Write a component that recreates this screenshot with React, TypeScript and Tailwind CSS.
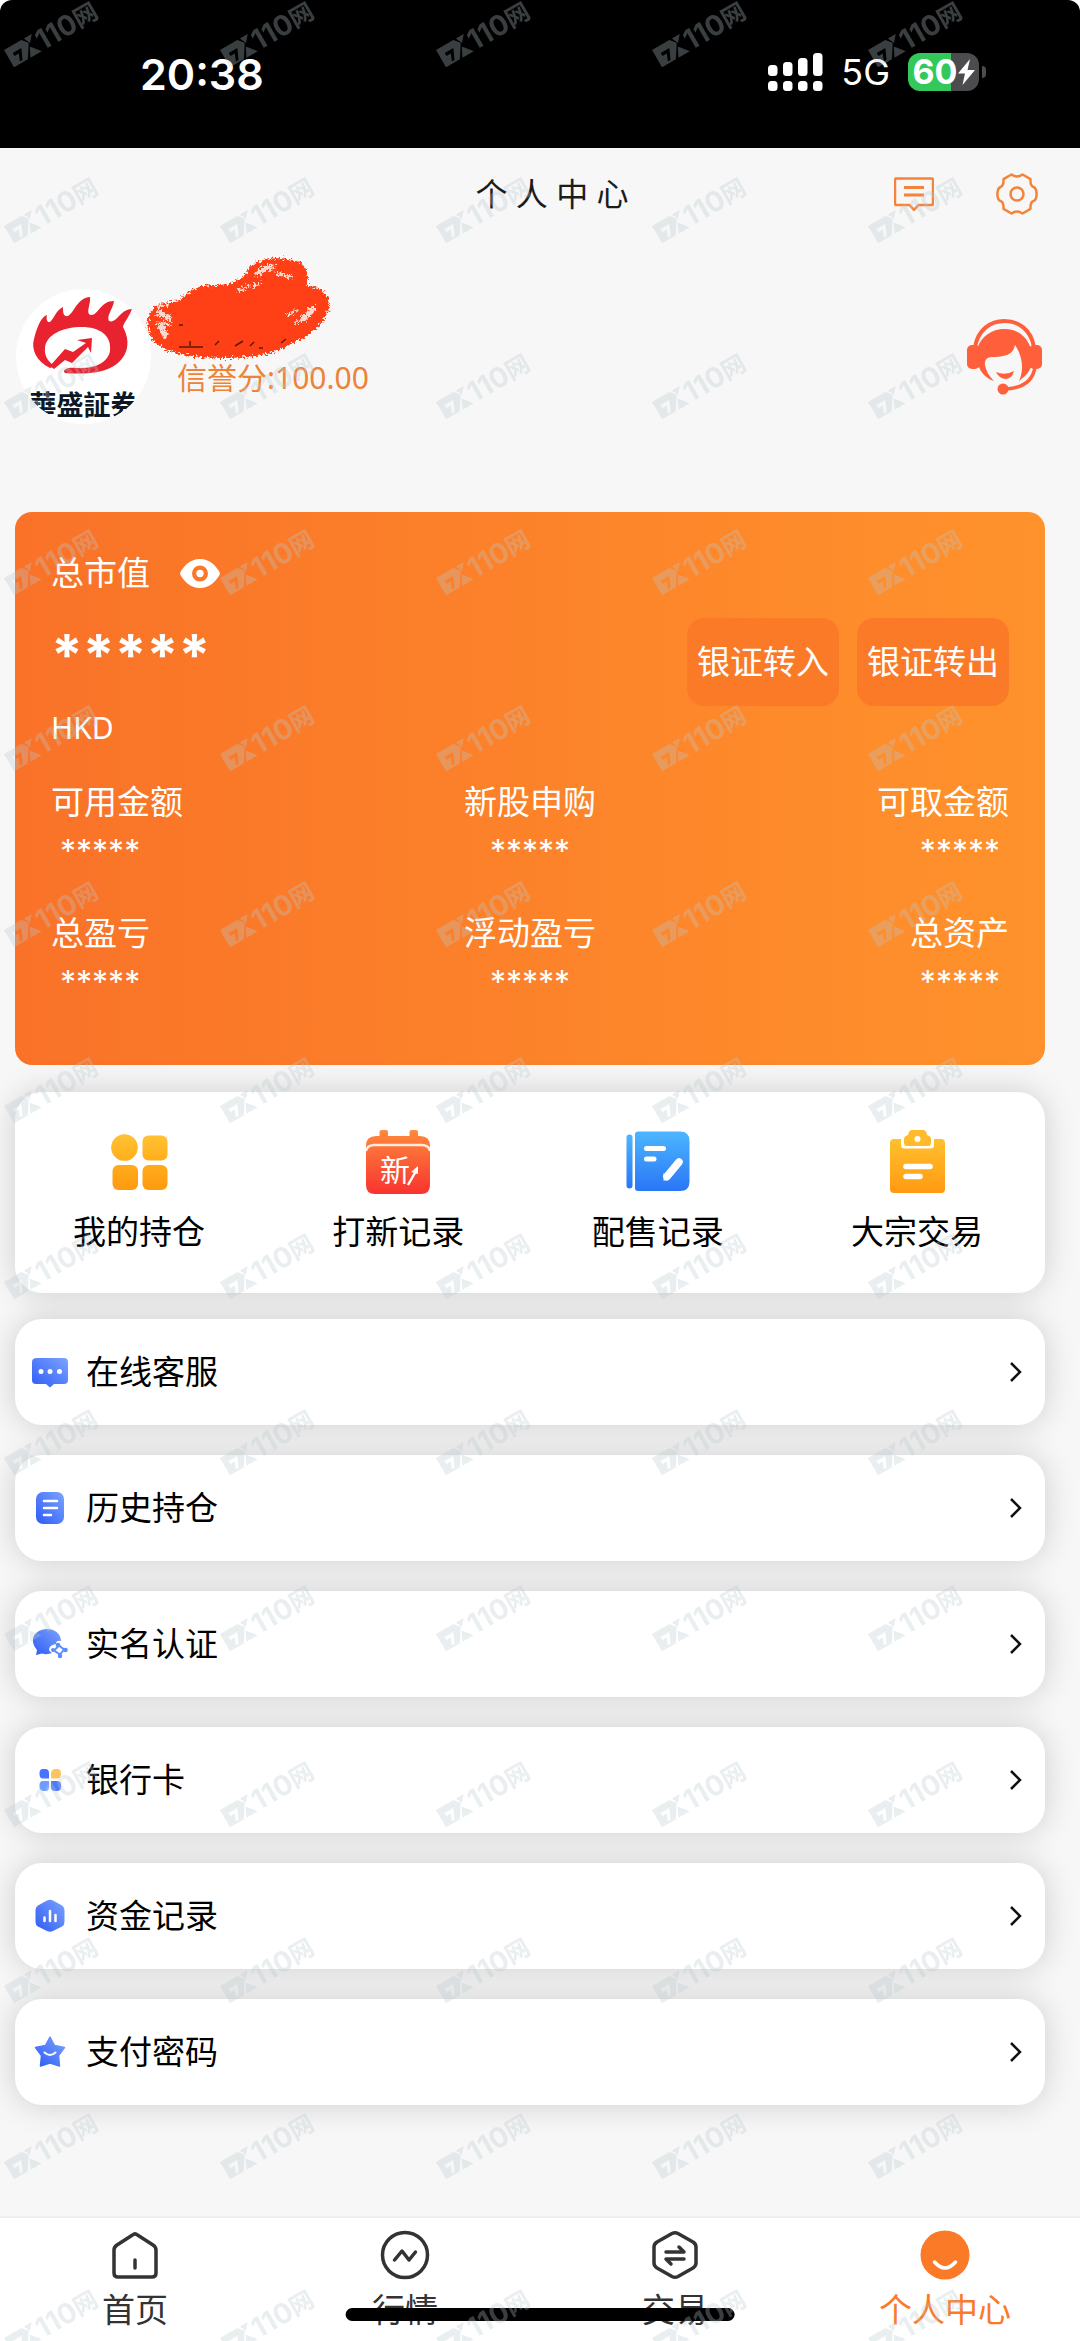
import type { ReactNode } from "react";

const FONT = "font-['Noto_Sans','Noto_Sans_CJK_SC',sans-serif]";

function Watermark() {
  return (
    <svg aria-hidden="true" className="pointer-events-none absolute inset-0 z-30 h-full w-full">
      <defs>
        <pattern id="wm" width="216" height="176" patternUnits="userSpaceOnUse">
          <g transform="translate(4 50) rotate(-30)" fill="#b8c8d0" fillOpacity="0.31">
            <path
              fillRule="evenodd"
              d="M0 0H20L25 6L16 20H0ZM6 7H16L11 18H8L11 10.500H6Z"
            />
            <path d="M23 0H32L26 7ZM26 12L32 20H19L24 10Z" />
            <text x="33" y="20" fontSize="28" fontWeight="700" fontFamily="Inter, sans-serif">
              110
            </text>
            <text x="76" y="19" fontSize="24" fontWeight="700" fontFamily="'Noto Sans CJK SC', sans-serif">
              网
            </text>
          </g>
        </pattern>
      </defs>
      <rect width="100%" height="100%" fill="url(#wm)" />
    </svg>
  );
}

function StatusBar() {
  const bars = [
    { x: 0, y: 12 },
    { x: 15, y: 9 },
    { x: 30, y: 5 },
    { x: 45, y: 0 },
  ];
  return (
    <div className="bg-white">
      <div className="flex h-[148px] items-start justify-between rounded-t-[12px] bg-black pt-[46px] pr-[94px] pl-[140px] font-['Inter',sans-serif] text-white">
        <span className="text-[43px] leading-[56px] font-semibold">20:38</span>
        <div className="flex h-[52px] items-center gap-[18px]">
          <svg width="55" height="38" viewBox="0 0 55 38" fill="#fff" aria-hidden="true">
            {bars.map((b) => (
              <g key={b.x}>
                <rect x={b.x} y={b.y} width="9.500" height={23 - b.y} rx="3.500" />
                <rect x={b.x} y="28" width="9.500" height="10" rx="3.500" />
              </g>
            ))}
          </svg>
          <span className="text-[36px] leading-[56px]">5G</span>
          <div className="flex items-center gap-[3px]">
            <div className="flex h-[38px] w-[71px] items-center justify-center rounded-[12px] bg-linear-to-r from-[#34c759] from-60% to-[#4c4c4e] to-60%">
              <span className="text-[34px] leading-[38px] font-bold">60</span>
              <svg width="17" height="26" viewBox="0 0 17 26" fill="#fff" aria-hidden="true">
                <path d="M12 0L0 14.500H7L4.500 26L17 11H9.500Z" />
              </svg>
            </div>
            <div className="h-[12px] w-[4px] rounded-r-full bg-[#4c4c4e]" />
          </div>
        </div>
      </div>
    </div>
  );
}

function Header() {
  return (
    <header className="grid h-[92px] grid-cols-[1fr_auto_1fr] items-center pr-[42px] pl-[66px]">
      <span />
      <h1 className="text-[32px] leading-[48px] text-[#1c1c1c]">个 人 中 心</h1>
      <div className="flex items-center justify-end gap-[62px]">
        <button type="button" aria-label="消息">
          <svg width="40" height="34" viewBox="0 0 40 34" fill="none" stroke="#f5833a" strokeWidth="2.500" strokeLinejoin="round">
            <path d="M2.500 1.500H37.500Q39 1.500 39 3V26.500Q39 28 37.500 28H24.500L20 32.800L15.500 28H2.500Q1 28 1 26.500V3Q1 1.500 2.500 1.500Z" />
            <path d="M10 10.500H30M10 18H30" strokeWidth="2.800" />
          </svg>
        </button>
        <button type="button" aria-label="设置">
          <svg width="42" height="42" viewBox="0 0 42 42" fill="none" stroke="#f5833a" strokeWidth="2.500" strokeLinejoin="round">
            <path d="M15.500 1.500Q21 5.500 26.500 1.500L34.500 6.200Q34 13.500 38.500 14.500Q41 17 40.500 21Q41 25 38.500 27.500Q34 28.500 34.500 35.800L26.500 40.500Q21 36.500 15.500 40.500L7.500 35.800Q8 28.500 3.500 27.500Q1 25 1.500 21Q1 17 3.500 14.500Q8 13.500 7.500 6.200Z" />
            <circle cx="21" cy="21" r="6.500" />
          </svg>
        </button>
      </div>
    </header>
  );
}

function BrandLogo() {
  return (
    <div className="relative h-[135px] w-[135px] overflow-hidden rounded-full bg-white">
      <svg width="135" height="100" viewBox="0 0 135 100" aria-hidden="true">
        <path
          fill="#e8222f"
          d="M34 79C20 72 15 60 18 50C21 38 25 28 31 26C30 30 31 34 34 33C38 30 40 21 47 18C47 23 47 28 52 27C58 24 61 9 74 8C75 15 69 25 75 26C83 26 84 12 98 12C97 20 90 27 93 32C101 35 104 20 116 20C113 28 107 35 107 38C118 58 108 76 86 82C74 85 60 85 49 84C45 80 54 78 60 79C80 80 92 73 94 62C96 46 83 38 66 38C46 38 30 46 29 59C28 67 33 74 39 77Z"
        />
        <path fill="#e8222f" d="M34 77L49 60L57 63L70 54L61 51L76 49L75 64L72 58L56 74L49 71L38 80Z" />
      </svg>
      <span className="absolute inset-x-0 bottom-[4px] text-center font-['Noto_Sans_CJK_TC',sans-serif] text-[27px] leading-[32px] font-bold whitespace-nowrap text-[#0d1826]">
        華盛証券
      </span>
    </div>
  );
}

function Scribble() {
  return (
    <svg width="186" height="106" viewBox="0 0 186 106" aria-hidden="true">
      <defs>
        <filter id="crayon" x="-5%" y="-5%" width="110%" height="110%">
          <feTurbulence type="fractalNoise" baseFrequency="0.45" numOctaves="2" seed="4" />
          <feDisplacementMap in="SourceGraphic" scale="9" xChannelSelector="R" yChannelSelector="G" />
        </filter>
      </defs>
      <g filter="url(#crayon)">
        <path
          fill="#ff4015"
          d="M4 61C7 51 18 46 34 47C42 34 56 29 76 30C92 29 100 22 105 12C116 2 138 1 154 7C164 14 164 24 162 31C176 31 185 40 184 52C181 68 166 80 148 88C132 99 108 103 80 103C54 103 28 100 15 91C4 84 0 72 4 61Z"
        />
        <g fill="none" stroke="#f9d9cf" strokeLinecap="round">
          <path d="M112 19Q118 12 128 12" strokeWidth="5" />
          <path d="M132 18L147 22M94 36L103 31M108 31L114 29" strokeWidth="3" />
          <path d="M14 58L24 63M16 72L20 80" strokeWidth="6" />
          <path d="M158 64L168 54" strokeWidth="6" />
          <path d="M11 67L26 70M143 60L152 55M150 68L156 66M12 52L22 50" strokeWidth="2" />
        </g>
      </g>
      <g stroke="#5a1a10" strokeWidth="1.500">
        <path d="M34 70H38M45 86V91M34 92H58M70 90L74 86M90 91L98 86M105 91L109 87M136 88L141 84M114 93H118" />
      </g>
    </svg>
  );
}

function Profile() {
  return (
    <section className="flex h-[272px] items-start pt-[15px] pr-[38px]">
      <div className="pt-[34px] pl-[16px]">
        <BrandLogo />
      </div>
      <div className="-ml-[6px] flex flex-col">
        <Scribble />
        <p className="-mt-[4px] pl-[32px] text-[30px] leading-[42px] text-[#ee8238]">信誉分:100.00</p>
      </div>
      <button type="button" aria-label="客服" className="mt-[64px] ml-auto">
        <svg width="75" height="76" viewBox="0 0 75 76" aria-hidden="true">
          <path d="M8 28C11 11 23 2 37.500 2S64 11 67 28" fill="none" stroke="#ff603b" strokeWidth="4" />
          <rect x="0" y="26" width="13" height="24" rx="5" fill="#ff603b" />
          <rect x="62" y="26" width="13" height="24" rx="5" fill="#ff603b" />
          <path
            fill="#ff603b"
            d="M10 30C14 17 25 10 37.500 10S60 17 64 30V48C61 55 57 58 52 62C57 51 56 38 48 26C46 36 38 38 24 38Q17 39 18 46C19 52 22 57 27 62C18 59 14 53 12 48Z"
          />
          <path d="M29 53Q38 57 47 52Q45 60 38 60Q32 59 29 53Z" fill="#ff603b" />
          <path d="M68 48C66 62 55 69 39 70" fill="none" stroke="#ff603b" strokeWidth="3.500" />
          <circle cx="36" cy="70" r="5.500" fill="#ff603b" />
        </svg>
      </button>
    </section>
  );
}

const STATS = [
  { label: "可用金额", align: "text-left" },
  { label: "新股申购", align: "text-center" },
  { label: "可取金额", align: "text-right" },
  { label: "总盈亏", align: "text-left" },
  { label: "浮动盈亏", align: "text-center" },
  { label: "总资产", align: "text-right" },
];

function AssetCard() {
  return (
    <section className="rounded-[17px] bg-linear-to-r from-[#f97228] to-[#ff922c] px-[36px] pt-[37px] pb-[62px] text-[33px] leading-[48px] text-white">
      <div className="flex items-center gap-[30px]">
        <span>总市值</span>
        <button type="button" aria-label="显示金额">
          <svg width="40" height="29" viewBox="0 0 40 29" aria-hidden="true">
            <path
              fill="#fff"
              fillRule="evenodd"
              d="M20 0C30 0 36 7 39.500 13Q40.200 14.500 39.500 16C36 22 30 29 20 29S4 22 .5 16Q-.2 14.500 .5 13C4 7 10 0 20 0ZM20 6.500A8 8 0 1 0 20 22.500A8 8 0 1 0 20 6.500ZM20 10.800A3.700 3.700 0 1 1 20 18.200A3.700 3.700 0 1 1 20 10.800Z"
            />
          </svg>
        </button>
      </div>
      <div className="flex items-start justify-between pt-[21px]">
        <div>
          <div className="h-[88px] font-['Inter',sans-serif] text-[57px] leading-[74px] font-bold">*****</div>
          <div className="text-[30px] leading-[44px]">HKD</div>
        </div>
        <div className="flex gap-[18px]">
          <button type="button" className="h-[88px] w-[152px] rounded-[17px] bg-[#fb7a28]">
            银证转入
          </button>
          <button type="button" className="h-[88px] w-[152px] rounded-[17px] bg-[#fb7a28]">
            银证转出
          </button>
        </div>
      </div>
      <dl className="grid grid-cols-3 gap-y-[37px] pt-[28px]">
        {STATS.map((s) => (
          <div key={s.label} className={s.align}>
            <dt>{s.label}</dt>
            <dd className="h-[46px] px-[9px] font-['Inter',sans-serif] text-[32px] leading-[52px]">*****</dd>
          </div>
        ))}
      </dl>
    </section>
  );
}

function Gradient({ id, from, to, diagonal }: { id: string; from: string; to: string; diagonal?: boolean }) {
  return (
    <linearGradient id={id} x1={diagonal ? 1 : 0} y1="0" x2="0" y2="1">
      <stop offset="0" stopColor={from} />
      <stop offset="1" stopColor={to} />
    </linearGradient>
  );
}

const SHORTCUTS: { label: string; icon: ReactNode }[] = [
  {
    label: "我的持仓",
    icon: (
      <svg width="64" height="64" viewBox="0 0 64 64" aria-hidden="true">
        <defs>
          <Gradient id="g1" from="#ffc233" to="#ffae1c" />
          <Gradient id="g2" from="#ffab1c" to="#ff9a10" />
        </defs>
        <circle cx="17.500" cy="17.500" r="13.300" fill="url(#g1)" />
        <rect x="35.500" y="5.500" width="25" height="25" rx="6" fill="url(#g1)" />
        <rect x="5.500" y="35" width="25.500" height="25" rx="6" fill="url(#g2)" />
        <rect x="35.500" y="35" width="25" height="25" rx="6" fill="url(#g2)" />
      </svg>
    ),
  },
  {
    label: "打新记录",
    icon: (
      <svg width="64" height="64" viewBox="0 0 64 64" aria-hidden="true">
        <defs>
          <Gradient id="g3" from="#ff8a3c" to="#f8332f" />
        </defs>
        <path
          fill="url(#g3)"
          d="M13.500 2Q13.500 0 15.500 0H20Q22 0 22 2V6H43.500V2Q43.500 0 45.500 0H50Q52 0 52 2V6H54Q64 6 64 16V55Q64 64 55 64H9Q0 64 0 55V16Q0 6 10 6H13.500Z"
        />
        <path d="M0 21Q1 15 9 15H55Q63 15 64 21" fill="none" stroke="#ffeadd" strokeWidth="2.500" />
        <text x="14" y="51" fontSize="30" fill="#fff" fontFamily="'Noto Sans CJK SC', sans-serif">
          新
        </text>
        <path d="M42 55L50 41" stroke="#fff" strokeWidth="2.500" />
        <path d="M52 36V44L45 42Z" fill="#fff" />
      </svg>
    ),
  },
  {
    label: "配售记录",
    icon: (
      <svg width="64" height="64" viewBox="0 0 64 64" aria-hidden="true">
        <defs>
          <Gradient id="g4" from="#4cb6ff" to="#2a76f6" />
        </defs>
        <rect x="0.500" y="4.500" width="6" height="54" rx="3" fill="url(#g4)" />
        <path d="M12 1.500H54Q63.500 1.500 63.500 11V51.500Q63.500 61 54 61H12Q9 61 9 58V4.500Q9 1.500 12 1.500Z" fill="url(#g4)" />
        <path d="M20.500 18.500H37.500M20.500 29H28" stroke="#fff" strokeWidth="5" strokeLinecap="round" />
        <path d="M53 32L41 46.500" stroke="#fff" strokeWidth="7.500" strokeLinecap="round" />
        <path d="M37.500 43V50.500H41L44 48Z" fill="#fff" />
      </svg>
    ),
  },
  {
    label: "大宗交易",
    icon: (
      <svg width="64" height="64" viewBox="0 0 64 64" aria-hidden="true">
        <defs>
          <Gradient id="g5" from="#ffc02e" to="#ff9a12" />
        </defs>
        <path
          fill="url(#g5)"
          d="M9 9H16V15Q16 18.500 19.500 18.500H45.500Q49 18.500 49 15V9H56Q60 9 60 13V59Q60 63 56 63H9Q5 63 5 59V13Q5 9 9 9Z"
        />
        <path
          fill="#ffbb2a"
          fillRule="evenodd"
          d="M27 0H38Q41 0 42 5Q46 6 46 9V13Q46 16 43 16H22Q19 16 19 13V9Q19 6 23 5Q24 0 27 0ZM32.500 6A3 3 0 1 0 32.500 12A3 3 0 1 0 32.500 6Z"
        />
        <path d="M21 36.500H45M21 46.500H35" stroke="#fff" strokeWidth="5.500" strokeLinecap="round" />
      </svg>
    ),
  },
];

const CARD = "rounded-[27px] bg-white shadow-[0_0_32px_rgba(0,0,0,0.17)]";

function Shortcuts() {
  return (
    <section className={`${CARD} mt-[27px] flex h-[201px] justify-between pt-[38px] pr-[62px] pl-[58px]`}>
      {SHORTCUTS.map((s) => (
        <button key={s.label} type="button" className="flex flex-col items-center gap-[14px] text-[33px] leading-[48px] text-black">
          {s.icon}
          <span>{s.label}</span>
        </button>
      ))}
    </section>
  );
}

const MENU: { label: string; icon: ReactNode }[] = [
  {
    label: "在线客服",
    icon: (
      <>
        <path d="M5 4H32Q36 4 36 8V26Q36 30 32 30H22L18 33.500L14 30H4Q0 30 0 26V8Q0 4 5 4Z" fill="url(#blue)" />
        <g fill="#fff">
          <circle cx="9" cy="17.500" r="2.500" />
          <circle cx="18" cy="17.500" r="2.500" />
          <circle cx="27.500" cy="17.500" r="2.500" />
        </g>
      </>
    ),
  },
  {
    label: "历史持仓",
    icon: (
      <>
        <rect x="4" y="2" width="28" height="32" rx="7" fill="url(#blue)" />
        <path d="M12 11H25M12 18H25M12 25H19" stroke="#fff" strokeWidth="2.500" strokeLinecap="round" />
      </>
    ),
  },
  {
    label: "实名认证",
    icon: (
      <>
        <path d="M15 3C24 3 29 9 29 15Q24 14 24 18Q17 19 17 24Q18 26 20 27Q15 29 10 27.500L4 29L5 24C-4 14 3 3 15 3Z" fill="url(#blue)" />
        <path d="M27 19.500L32 23.500L28 28.500L22 24.500Z" fill="#fff" stroke="#5b8cff" strokeWidth="2" />
        <g fill="#5b8cff">
          <circle cx="26" cy="19" r="2.300" />
          <circle cx="33.500" cy="24" r="2.300" />
          <circle cx="28" cy="30" r="2.300" />
          <circle cx="21" cy="24" r="2" />
        </g>
      </>
    ),
  },
  {
    label: "银行卡",
    icon: (
      <>
        <path d="M11 7H13Q17 7 17 11V16.500H11Q7.500 16.500 7.500 12V11Q7.500 7 11 7Z" fill="#4a72fa" />
        <path d="M24 7H25Q29 7 29 11V12Q29 16.500 25 16.500H19V12Q19 7 24 7Z" fill="#fdc562" />
        <path d="M11 19H17V25Q17 29 13 29H12Q7.500 29 7.500 25V23Q7.500 19 11 19Z" fill="#6c9cff" />
        <path d="M19 19H25Q29 19 29 23V25Q29 29 25 29H23Q19 29 19 25Z" fill="#4f78fa" />
      </>
    ),
  },
  {
    label: "资金记录",
    icon: (
      <>
        <path d="M15 2.500Q18 1 21 2.500L30 7.500Q32.500 9 32.500 12V24Q32.500 27 30 28.500L21 33Q18 34.500 15 33L6 28.500Q3.500 27 3.500 24V12Q3.500 9 6 7.500Z" fill="url(#blue)" />
        <path d="M12.500 19.500V23M18 13V23M23.500 17V23" stroke="#fff" strokeWidth="2.500" strokeLinecap="round" />
      </>
    ),
  },
  {
    label: "支付密码",
    icon: (
      <>
        <path d="M18 3L22.500 11.500L32.500 13.500L26.500 21.500L27.500 32L18 29L8.500 32L9.500 21.500L3.500 13.500L13.500 11.500Z" fill="url(#blue)" stroke="url(#blue)" strokeWidth="1.500" strokeLinejoin="round" />
        <path d="M12.500 18.500Q18 23.500 23.500 18.500" fill="none" stroke="#fff" strokeWidth="2" strokeLinecap="round" />
      </>
    ),
  },
];

function Menu() {
  return (
    <nav className="flex flex-col gap-[30px] pt-[26px]">
      {MENU.map((m) => (
        <button
          key={m.label}
          type="button"
          className={`${CARD} flex h-[106px] items-center pr-[23px] pl-[17px] text-[33px] leading-[48px] text-black`}
        >
          <svg width="36" height="36" viewBox="0 0 36 36" aria-hidden="true">
            <defs>
              <Gradient id="blue" from="#7ba4ff" to="#2f5bf5" diagonal />
            </defs>
            {m.icon}
          </svg>
          <span className="ml-[18px]">{m.label}</span>
          <svg className="ml-auto" width="14" height="22" viewBox="0 0 14 22" fill="none" stroke="#111" strokeWidth="2.500" aria-hidden="true">
            <path d="M3 2L12 11L3 20" />
          </svg>
        </button>
      ))}
    </nav>
  );
}

const TABS: { label: string; active?: boolean; icon: ReactNode }[] = [
  {
    label: "首页",
    icon: (
      <g fill="none" stroke="#333" strokeWidth="3.500" strokeLinejoin="round" strokeLinecap="round">
        <path d="M22.500 5Q25 2.800 27.500 5L43 15Q46 17 46 20V43Q46 47 42 47H8Q4 47 4 43V20Q4 17 7 15Z" />
        <path d="M25 30V38" />
      </g>
    ),
  },
  {
    label: "行情",
    icon: (
      <g fill="none" stroke="#333" strokeWidth="3.500" strokeLinejoin="round" strokeLinecap="round">
        <circle cx="25" cy="25" r="22.500" />
        <path d="M14.500 30L22 21L29 30L35.500 22" strokeWidth="3.500" />
      </g>
    ),
  },
  {
    label: "交易",
    icon: (
      <g fill="none" stroke="#333" strokeWidth="3.500" strokeLinejoin="round" strokeLinecap="round">
        <path d="M22 3.500Q25 2 28 3.500L43 12Q46 14 46 17V33Q46 36 43 38L28 46.500Q25 48 22 46.500L7 38Q4 36 4 33V17Q4 14 7 12Z" />
        <path d="M16 22H34L29 17M34 29H16L21 34" />
      </g>
    ),
  },
  {
    label: "个人中心",
    active: true,
    icon: (
      <>
        <circle cx="25" cy="25" r="24.500" fill="#fa7a28" />
        <path d="M14.500 32Q25 44 35.500 32" fill="none" stroke="#fff" strokeWidth="3.500" strokeLinecap="round" />
      </>
    ),
  },
];

function TabBar() {
  return (
    <nav className="relative mt-auto grid h-[125px] grid-cols-4 border-t-2 border-[#eeeeee] bg-white pt-[12px]">
      {TABS.map((t) => (
        <button
          key={t.label}
          type="button"
          className={`flex flex-col items-center gap-[6px] text-[33px] leading-[48px] ${t.active ? "text-[#fa7a28]" : "text-[#333333]"}`}
        >
          <svg width="50" height="50" viewBox="0 0 50 50" aria-hidden="true">
            {t.icon}
          </svg>
          <span>{t.label}</span>
        </button>
      ))}
      <div className="absolute bottom-[20px] left-1/2 h-[13px] w-[36%] -translate-x-1/2 rounded-full bg-black" />
    </nav>
  );
}

export default function App() {
  return (
    <div className={`relative flex min-h-screen flex-col overflow-hidden bg-[#f7f7f7] ${FONT}`}>
      <StatusBar />
      <Header />
      <Profile />
      <main className="pr-[35px] pl-[15px]">
        <AssetCard />
        <Shortcuts />
        <Menu />
      </main>
      <TabBar />
      <Watermark />
    </div>
  );
}
